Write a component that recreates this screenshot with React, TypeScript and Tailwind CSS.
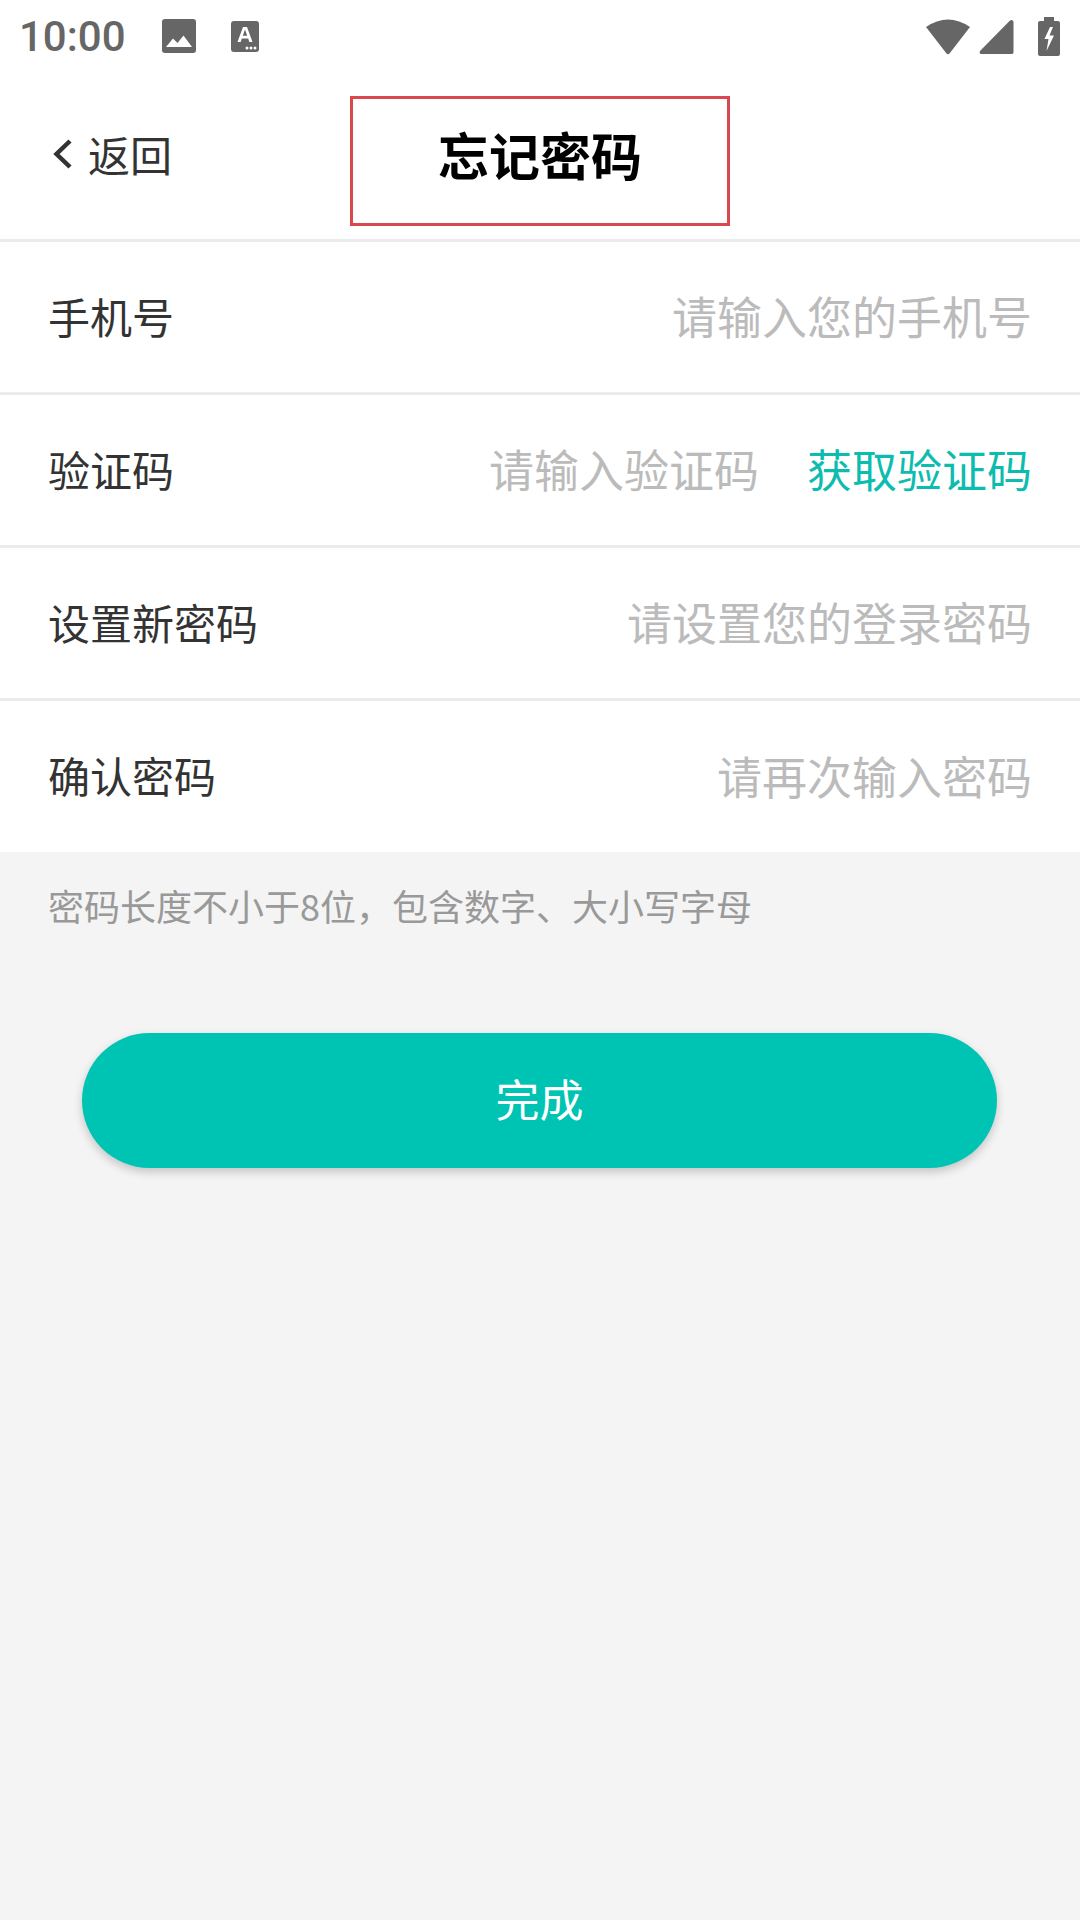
import React from 'react';

const rows = [
  { label: '手机号', placeholder: '请输入您的手机号' },
  { label: '验证码', placeholder: '请输入验证码', action: '获取验证码' },
  { label: '设置新密码', placeholder: '请设置您的登录密码' },
  { label: '确认密码', placeholder: '请再次输入密码' },
];

const StatusBar = () => (
  <div className="flex items-center h-[72px] pl-[19px] pr-[20px] text-[#666666]">
    <span className="font-['Roboto',sans-serif] font-medium text-[42px] leading-none pt-[2px]">10:00</span>
    {/* image notification */}
    <svg className="ml-[36px]" width="34" height="34" viewBox="0 0 34 34">
      <rect width="34" height="34" rx="3" fill="#666666" />
      <path d="M4 28 L11 19.5 L15.5 24 L21.5 16.5 L30 28 Z" fill="#ffffff" />
    </svg>
    {/* keyboard notification */}
    <svg className="ml-[35px]" width="28" height="31" viewBox="0 0 28 31">
      <rect width="28" height="31" rx="3" fill="#666666" />
      <path d="M6.5 21 L12 6 H16 L21.5 21 H18.3 L17.2 17.6 H10.8 L9.7 21 Z M11.8 14.8 H16.2 L14 8.6 Z" fill="#ffffff" fillRule="evenodd" />
      <circle cx="16" cy="27" r="1.5" fill="#ffffff" />
      <circle cx="20" cy="27" r="1.5" fill="#ffffff" />
      <circle cx="24" cy="27" r="1.5" fill="#ffffff" />
    </svg>
    <div className="ml-auto flex items-center">
      {/* wifi */}
      <svg width="46" height="37" viewBox="0 0 46 37">
        <path d="M1 9 Q23 -6 45 9 L24.5 35.5 Q23 37 21.5 35.5 Z" fill="#666666" />
      </svg>
      {/* signal */}
      <svg className="ml-[8px]" width="35" height="35" viewBox="0 0 35 35">
        <path d="M1 32 L31 1.5 Q34 0 34.500 3 V33 Q34.500 35 33 35 H2 Q0 34.500 1 32 Z" fill="#666666" />
      </svg>
      {/* battery charging */}
      <svg className="ml-[24px]" width="22" height="39" viewBox="0 0 22 39">
        <path d="M6 0 H16 V4 H20 Q22 4 22 6 V37 Q22 39 20 39 H2 Q0 39 0 37 V6 Q0 4 2 4 H6 Z" fill="#666666" />
        <path d="M12 10 L6.500 22 H10.500 L8.500 34 L16 18.500 H11.500 L15 10 Z" fill="#ffffff" />
      </svg>
    </div>
  </div>
);

export default function App() {
  return (
    <div className="w-[1080px] h-[1920px] bg-[#f4f4f4] flex flex-col font-['Noto_Sans_CJK_SC','Noto_Sans',sans-serif]">
      <div className="bg-white">
        <StatusBar />
        {/* Header */}
        <div className="grid grid-cols-[350px_380px_1fr] h-[170px] pt-[24px] pb-[13px] border-b-[3px] border-[#ebebeb]">
          <div className="flex items-center pl-[52px] pb-[14px] text-[#333333]">
            <svg width="20" height="32" viewBox="0 0 20 32" fill="none">
              <path d="M18 3 L4.500 16 L18 29" stroke="#333333" strokeWidth="4.500" />
            </svg>
            <span className="ml-[16px] text-[42px] leading-none">返回</span>
          </div>
          <div className="flex items-center justify-center border-[3px] border-[#d9484e] pb-[13px]">
            <span className="text-[51px] leading-none font-bold text-black">忘记密码</span>
          </div>
        </div>
        {/* Form rows */}
        {rows.map((row, i) => (
          <div
            key={row.label}
            className={`flex items-center justify-between pl-[48px] pr-[48px] pb-[3px] text-[42px] leading-none ${i < rows.length - 1 ? 'h-[153px] border-b-[3px] border-[#ebebeb]' : 'h-[151px]'}`}
          >
            <span className="text-[#333333]">{row.label}</span>
            <div className="flex items-center gap-[48px] text-[45px]">
              <span className="text-[#bbbbbb]">{row.placeholder}</span>
              {row.action && <span className="text-[#0cbcae]">{row.action}</span>}
            </div>
          </div>
        ))}
      </div>
      <p className="mt-[31px] ml-[48px] text-[36px] leading-[44px] text-[#999999]">密码长度不小于8位，包含数字、大小写字母</p>
      <button className="mt-[106px] ml-[82px] w-[915px] h-[135px] pb-[6px] rounded-full bg-[#00c4b3] text-white text-[44px] shadow-[0_4px_10px_rgba(0,0,0,0.2)]">
        完成
      </button>
    </div>
  );
}
